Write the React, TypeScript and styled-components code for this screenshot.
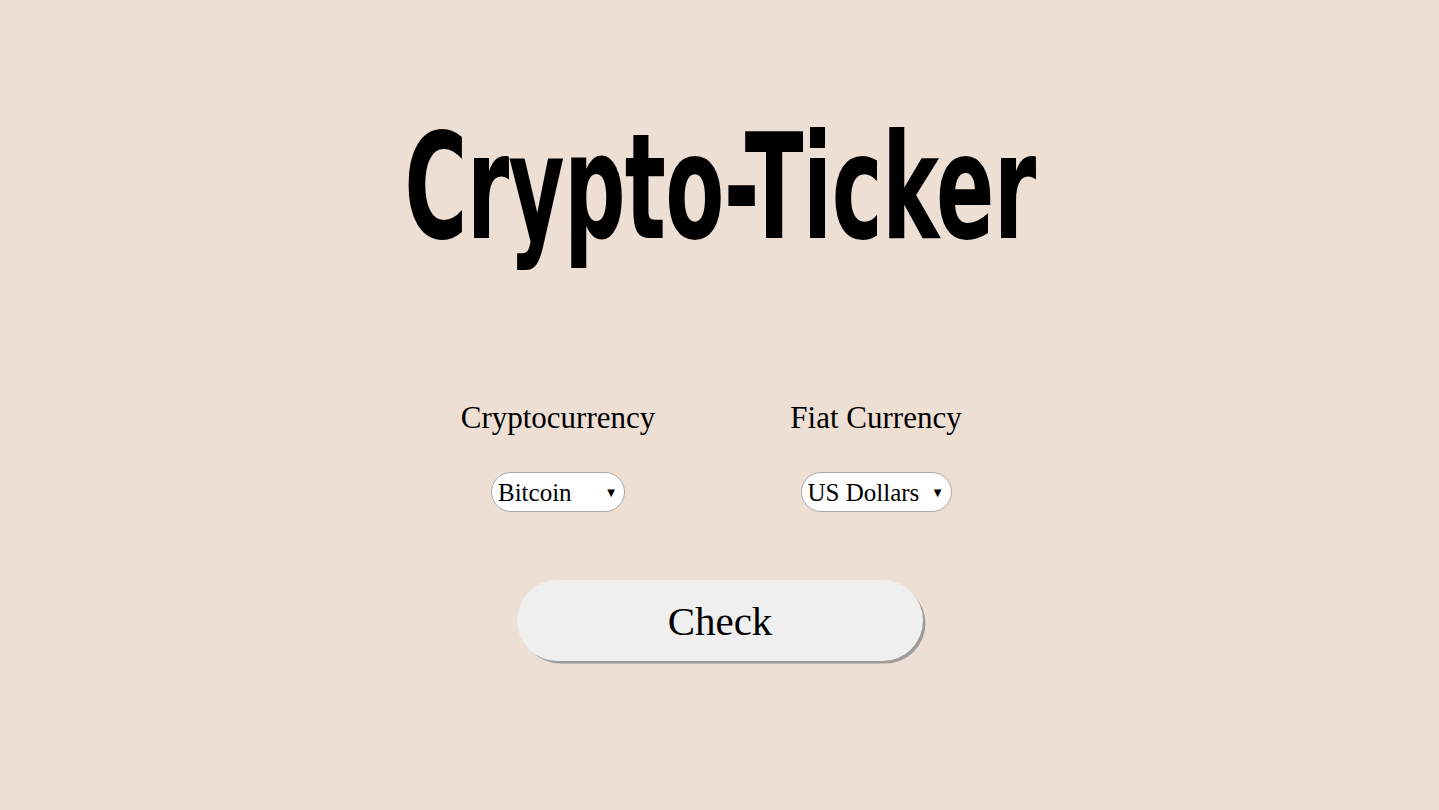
import React from "react";
import styled, { createGlobalStyle } from "styled-components";

const Global = createGlobalStyle`
  html, body { margin: 0; padding: 0; background: #eedfd5; }
  body { font-family: "Liberation Serif", "DejaVu Serif", serif; color: #000; }
`;

const Page = styled.main`
  min-height: 810px;
  display: flex;
  flex-direction: column;
  align-items: center;
`;

const Title = styled.h1`
  margin: 107px 0 0;
  font-family: "DejaVu Sans Condensed", "DejaVu Sans", sans-serif;
  font-weight: 700;
  font-size: 146px;
  line-height: 160px;
  letter-spacing: -1px;
  transform: scaleX(0.655);
  white-space: nowrap;
`;

const Form = styled.form`
  margin-top: 133px;
  display: flex;
  flex-direction: column;
  align-items: center;
`;

const Fields = styled.div`
  display: grid;
  grid-template-columns: 240px 240px;
  column-gap: 78px;
  margin-left: -5px;
`;

const Field = styled.div`
  display: flex;
  flex-direction: column;
  align-items: center;
`;

const Label = styled.label`
  font-size: 31px;
  line-height: 36px;
`;

const SelectWrap = styled.div`
  position: relative;
  margin-top: 36px;
`;

const Select = styled.select<{ $w: number }>`
  appearance: none;
  -webkit-appearance: none;
  height: 40px;
  width: ${(p) => p.$w}px;
  box-sizing: border-box;
  border: 1px solid #a9a9a9;
  border-radius: 20px;
  background: #fff;
  padding: 0 0 0 6px;
  font-family: "Liberation Serif", serif;
  font-size: 25px;
  color: #000;
  outline: none;
`;

const Arrow = styled.span`
  position: absolute;
  right: 10px;
  top: 50%;
  transform: translateY(-50%);
  font-size: 10px;
  pointer-events: none;
  font-family: "DejaVu Sans", sans-serif;
`;

const Button = styled.button`
  margin-top: 68px;
  margin-left: 1px;
  width: 406px;
  height: 81px;
  box-sizing: border-box;
  border: none;
  border-radius: 41px;
  background: #efefef;
  box-shadow: 3px 3px 0 -0.5px #9c9c9c;
  font-family: "Liberation Serif", serif;
  font-size: 41px;
  color: #000;
  padding: 0;
`;

export default function App() {
  return (
    <Page>
      <Global />
      <Title>Crypto-Ticker</Title>
      <Form onSubmit={(e) => e.preventDefault()}>
        <Fields>
          <Field>
            <Label>Cryptocurrency</Label>
            <SelectWrap>
              <Select $w={134} defaultValue="BTC">
                <option value="BTC">Bitcoin</option>
                <option value="ETH">Ethereum</option>
              </Select>
              <Arrow>▼</Arrow>
            </SelectWrap>
          </Field>
          <Field>
            <Label>Fiat Currency</Label>
            <SelectWrap>
              <Select $w={151} defaultValue="USD">
                <option value="USD">US Dollars</option>
                <option value="EUR">Euros</option>
              </Select>
              <Arrow>▼</Arrow>
            </SelectWrap>
          </Field>
        </Fields>
        <Button type="submit">Check</Button>
      </Form>
    </Page>
  );
}
